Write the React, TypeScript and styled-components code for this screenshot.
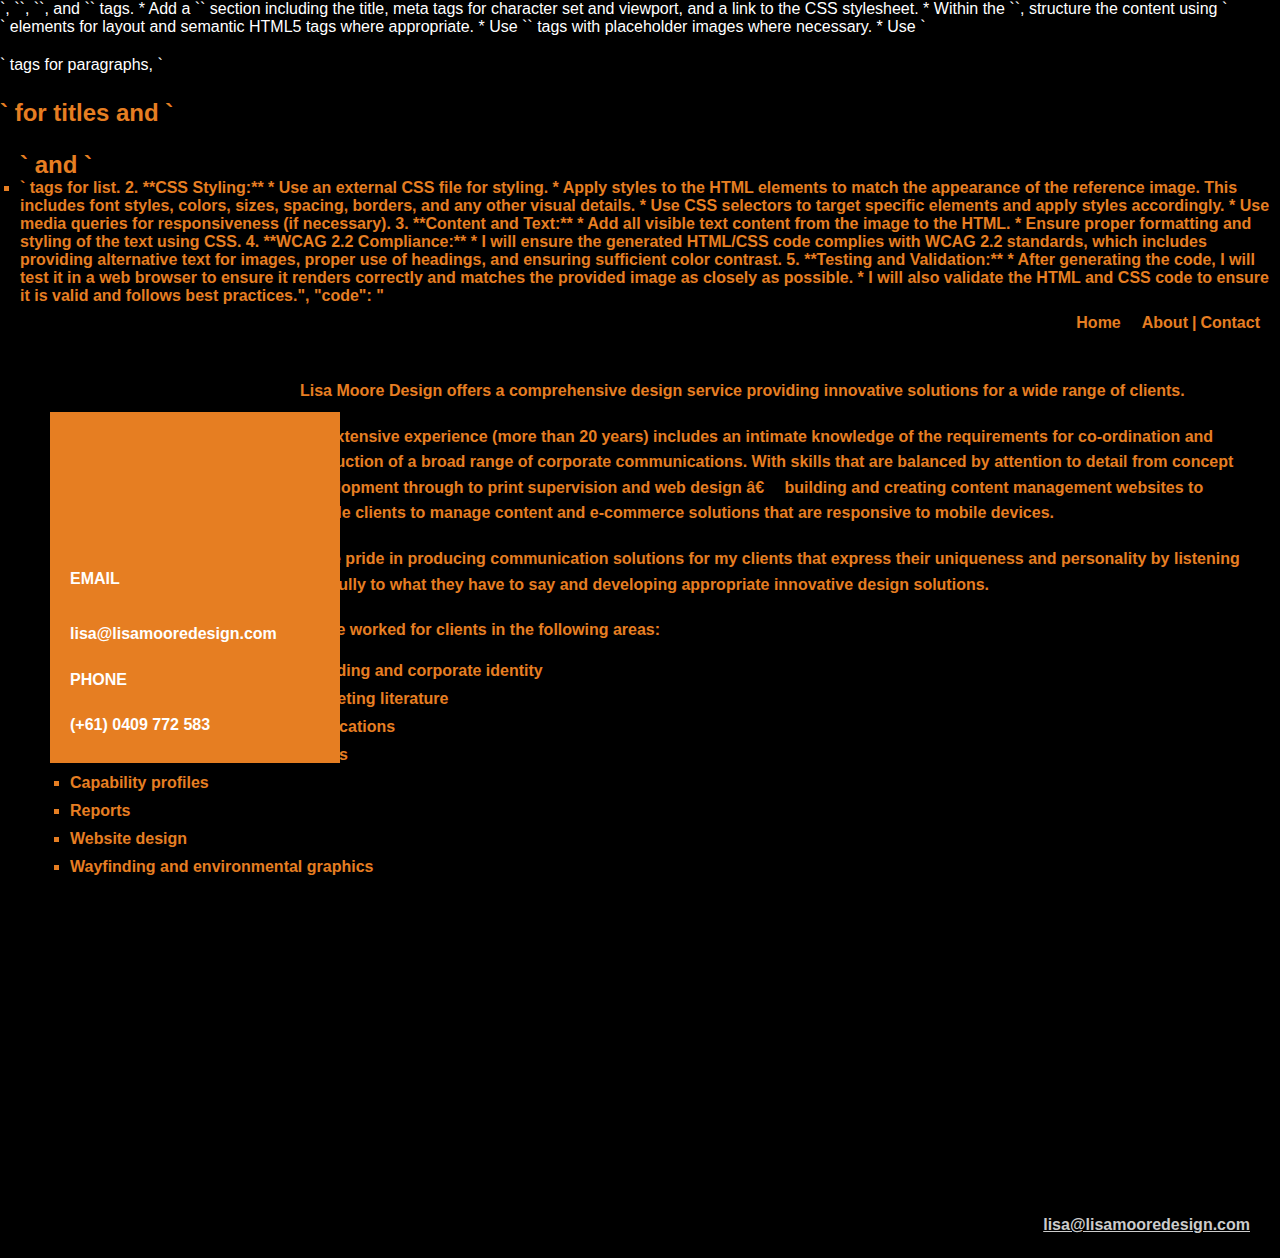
import React from "react";
import styled, { createGlobalStyle } from "styled-components";

const ORANGE = "#e67e22";

const GlobalStyle = createGlobalStyle`
  html, body {
    margin: 0;
    padding: 0;
    background: #000;
  }
  body {
    font-family: "Liberation Sans", Arial, Helvetica, sans-serif;
    font-size: 16px;
    color: #fff;
  }
`;

const Page = styled.div`
  min-height: 1258px;
  display: flex;
  flex-direction: column;
  background: #000;
`;

const RawLine = styled.div`
  color: #fff;
  line-height: normal;
`;

const RawPara = styled.p`
  margin: 20px 0 0;
  color: #fff;
  line-height: normal;
`;

const StrayHeading = styled.h2<{ $top: number }>`
  font-size: 24px;
  font-weight: bold;
  color: ${ORANGE};
  margin: ${(p) => p.$top}px 0 0;
  line-height: normal;
`;

const StrayList = styled.ul`
  margin: 0;
  padding-left: 20px;
  list-style: square;
  color: ${ORANGE};
  font-weight: bold;
  line-height: normal;
`;

const Nav = styled.nav`
  display: flex;
  justify-content: flex-end;
  align-items: baseline;
  gap: 21px;
  padding: 0 20px;
  margin-top: 9px;
  font-weight: bold;
  color: ${ORANGE};
`;

const NavGroup = styled.span`
  display: inline-flex;
  gap: 4px;
`;

const NavLink = styled.a`
  color: ${ORANGE};
  text-decoration: none;
`;

const Main = styled.main`
  display: flow-root;
  padding: 0 30px 0 50px;
  margin-top: 46px;
`;

const Sidebar = styled.aside`
  float: left;
  width: 250px;
`;

const ContactCard = styled.div`
  position: relative;
  z-index: 1;
  box-sizing: content-box;
  width: 250px;
  margin-top: 34px;
  padding: 20px 20px 25px;
  background: ${ORANGE};
  color: #fff;
  font-weight: bold;
`;

const CardSpacer = styled.div`
  height: 134px;
`;

const CardLine = styled.p<{ $gap: number }>`
  margin: 0 0 ${(p) => p.$gap}px;
  line-height: 26px;
`;

const BodyText = styled.p<{ $after?: number }>`
  margin: 0 0 ${(p) => p.$after ?? 20}px;
  line-height: 1.6;
  color: ${ORANGE};
  font-weight: bold;
`;

const ServiceList = styled.ul`
  margin: 0;
  padding-left: 20px;
  list-style: square;
  color: ${ORANGE};
  font-weight: bold;
`;

const ServiceItem = styled.li`
  line-height: 28px;
`;

const Footer = styled.footer`
  margin-top: auto;
  padding: 0 30px 24px;
  text-align: right;
  line-height: 18px;
  font-weight: bold;
`;

const FooterLink = styled.a`
  color: #cccccc;
  text-decoration: underline;
`;

const services = [
  "Branding and corporate identity",
  "Marketing literature",
  "Publications",
  "Logos",
  "Capability profiles",
  "Reports",
  "Website design",
  "Wayfinding and environmental graphics",
];

const listText =
  '` tags for list. 2. **CSS Styling:** * Use an external CSS file for styling. * Apply styles to the HTML elements to match the appearance of the reference image. This includes font styles, colors, sizes, spacing, borders, and any other visual details. * Use CSS selectors to target specific elements and apply styles accordingly. * Use media queries for responsiveness (if necessary). 3. **Content and Text:** * Add all visible text content from the image to the HTML. * Ensure proper formatting and styling of the text using CSS. 4. **WCAG 2.2 Compliance:** * I will ensure the generated HTML/CSS code complies with WCAG 2.2 standards, which includes providing alternative text for images, proper use of headings, and ensuring sufficient color contrast. 5. **Testing and Validation:** * After generating the code, I will test it in a web browser to ensure it renders correctly and matches the provided image as closely as possible. * I will also validate the HTML and CSS code to ensure it is valid and follows best practices.", "code": "';

export default function App() {
  return (
    <>
      <GlobalStyle />
      <Page>
        <RawLine>
          {"`, ``, ``, and `` tags. * Add a `` section including the title, meta tags for character set and viewport, and a link to the CSS stylesheet. * Within the ``, structure the content using `"}
        </RawLine>
        <RawLine>
          {"` elements for layout and semantic HTML5 tags where appropriate. * Use `` tags with placeholder images where necessary. * Use `"}
        </RawLine>
        <RawPara>{"` tags for paragraphs, `"}</RawPara>
        <StrayHeading $top={25}>{"` for titles and `"}</StrayHeading>
        <StrayList>
          <StrayHeading $top={24}>{"` and `"}</StrayHeading>
          <li>{listText}</li>
        </StrayList>
        <Nav>
          <NavLink href="#">Home</NavLink>
          <NavGroup>
            <NavLink href="#">About</NavLink>
            <span>|</span>
            <NavLink href="#">Contact</NavLink>
          </NavGroup>
        </Nav>
        <Main>
          <Sidebar>
            <ContactCard>
              <CardSpacer />
              <CardLine $gap={29}>EMAIL</CardLine>
              <CardLine $gap={20}>lisa@lisamooredesign.com</CardLine>
              <CardLine $gap={19}>PHONE</CardLine>
              <CardLine $gap={0}>(+61) 0409 772 583</CardLine>
            </ContactCard>
          </Sidebar>
          <BodyText>
            Lisa Moore Design offers a comprehensive design service providing
            innovative solutions for a wide range of clients.
          </BodyText>
          <BodyText>
            {
              "My extensive experience (more than 20 years) includes an intimate knowledge of the requirements for co-ordination and production of a broad range of corporate communications. With skills that are balanced by attention to detail from concept development through to print supervision and web design \u00e2\u20ac\u2003 building and creating content management websites to enable clients to manage content and e-commerce solutions that are responsive to mobile devices."
            }
          </BodyText>
          <BodyText>
            I take pride in producing communication solutions for my clients
            that express their uniqueness and personality by listening carefully
            to what they have to say and developing appropriate innovative
            design solutions.
          </BodyText>
          <BodyText $after={14}>
            I have worked for clients in the following areas:
          </BodyText>
          <ServiceList>
            {services.map((s) => (
              <ServiceItem key={s}>{s}</ServiceItem>
            ))}
          </ServiceList>
        </Main>
        <Footer>
          <FooterLink href="mailto:lisa@lisamooredesign.com">
            lisa@lisamooredesign.com
          </FooterLink>
        </Footer>
      </Page>
    </>
  );
}
